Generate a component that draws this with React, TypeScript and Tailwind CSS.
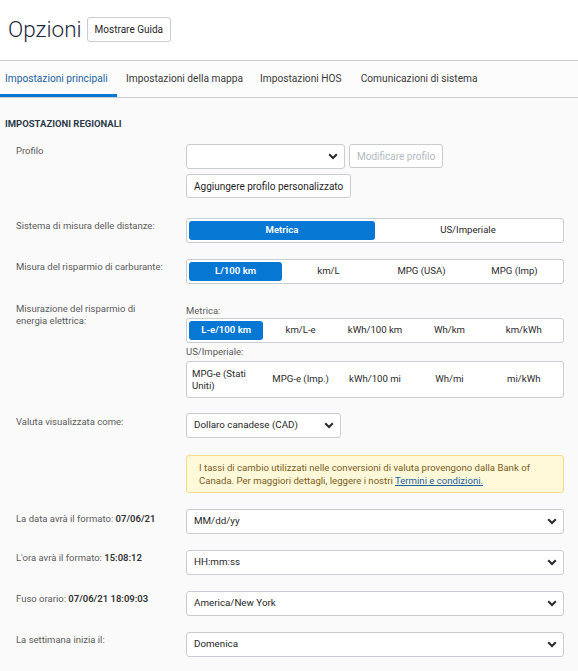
import React from "react";

const Chevron = () => (
  <svg width="10" height="7" viewBox="0 0 10 7" className="shrink-0">
    <path d="M1.2 1.3 L5 5 L8.8 1.3" fill="none" stroke="#2b2b2b" strokeWidth="2.1" />
  </svg>
);

function Select({ value, className = "" }: { value: string; className?: string }) {
  return (
    <div
      className={`h-[25px] bg-white border border-[#c9ccd1] rounded-[3px] flex items-center justify-between pl-[7px] pr-[6px] text-[9.8px] text-[#1f1f1f] ${className}`}
    >
      <span>{value}</span>
      <Chevron />
    </div>
  );
}

function Segmented({ options, active = 0, cols }: { options: React.ReactNode[]; active?: number; cols: string }) {
  return (
    <div className={`bg-white border border-[#c9ccd1] rounded-[3px] p-[2px] grid ${cols}`}>
      {options.map((o, i) => (
        <div
          key={i}
          className={
            i === active
              ? "h-[19px] bg-[#0777d4] text-white font-semibold rounded-[3px] flex items-center justify-center text-[9.6px]"
              : "h-[19px] text-[#2a2a2a] flex items-center justify-center text-[9.6px]"
          }
        >
          {o}
        </div>
      ))}
    </div>
  );
}

function Row({ label, children, className = "", labelClass = "" }: { label: React.ReactNode; children: React.ReactNode; className?: string; labelClass?: string }) {
  return (
    <div className={`flex ${className}`}>
      <div className={`w-[170px] shrink-0 text-[9.5px] leading-[12px] text-[#5a5a5a] pr-2 ${labelClass}`}>{label}</div>
      <div className="w-[378px] shrink-0">{children}</div>
    </div>
  );
}

export default function App() {
  return (
    <div className="min-h-[671px] bg-white font-['Roboto',sans-serif]">
      <div className="h-[60px] flex items-center pl-[8px] gap-[5px] pb-[2px]">
        <h1 className="text-[22.5px] font-light text-[#1e2a3b] leading-none">Opzioni</h1>
        <button className="h-[25px] px-[7px] border border-[#c9ccd1] rounded-[3px] bg-white text-[10px] text-[#1f1f1f]">
          Mostrare Guida
        </button>
      </div>
      <div className="border-t border-b border-[#c9ccd1] bg-[#fcfcfc] h-[38px] flex text-[10.2px] text-[#3a3a3a]">
        <div className="px-[5px] flex items-center border-b-[3px] border-[#0777d4] text-[#1c5f9e] w-[117px] pt-[3px]">
          Impostazioni principali
        </div>
        <div className="pl-[9px] flex items-center">Impostazioni della mappa</div>
        <div className="pl-[17px] flex items-center">Impostazioni HOS</div>
        <div className="pl-[19px] flex items-center">Comunicazioni di sistema</div>
      </div>
      <div className="bg-[#fafafa] pl-[16px] pb-[16px]">
        <div className="-ml-[11px] pt-[20px] text-[9.5px] font-bold text-[#2d3a4b] leading-[12px]">IMPOSTAZIONI REGIONALI</div>

        <Row label="Profilo" className="mt-[14px]" labelClass="pt-[1px]">
          <div className="flex gap-[4px]">
            <Select value="" className="w-[159px] h-[24px]" />
            <button className="h-[24px] px-[7px] border border-[#c9ccd1] rounded-[3px] bg-white text-[10px] text-[#b4bac2]">
              Modificare profilo
            </button>
          </div>
          <button className="mt-[5px] h-[24px] px-[7px] border border-[#c9ccd1] rounded-[3px] bg-white text-[10px] text-[#1f1f1f]">
            Aggiungere profilo personalizzato
          </button>
        </Row>

        <Row label="Sistema di misura delle distanze:" className="mt-[20px]" labelClass="pt-[2px]">
          <Segmented options={["Metrica", "US/Imperiale"]} cols="grid-cols-2" />
        </Row>

        <Row label="Misura del risparmio di carburante:" className="mt-[16px]" labelClass="pt-[2px]">
          <Segmented options={["L/100 km", "km/L", "MPG (USA)", "MPG (Imp)"]} cols="grid-cols-4" />
        </Row>

        <Row label="Misurazione del risparmio di energia elettrica:" className="mt-[19px]" labelClass="pr-[30px]">
          <div className="text-[9.5px] text-[#5a5a5a] leading-[12px] pt-[2px]">Metrica:</div>
          <div className="mt-[1px]">
            <Segmented options={["L-e/100 km", "km/L-e", "kWh/100 km", "Wh/km", "km/kWh"]} cols="grid-cols-5" />
          </div>
          <div className="text-[9.5px] text-[#5a5a5a] leading-[12px] mt-[3px]">US/Imperiale:</div>
          <div className="mt-[3px] bg-white border border-[#c9ccd1] rounded-[3px] px-[2px] grid grid-cols-5 h-[37px] text-[9.6px] text-[#2a2a2a]">
            <div className="flex items-center pl-[3px] leading-[12px]">MPG-e (Stati Uniti)</div>
            <div className="flex items-center justify-center">MPG-e (Imp.)</div>
            <div className="flex items-center justify-center">kWh/100 mi</div>
            <div className="flex items-center justify-center">Wh/mi</div>
            <div className="flex items-center justify-center">mi/kWh</div>
          </div>
        </Row>

        <Row label="Valuta visualizzata come:" className="mt-[15px]" labelClass="pt-[3px]">
          <Select value="Dollaro canadese (CAD)" className="w-[155px] h-[24px]" />
          <div className="mt-[17px] bg-[#fff8d9] border border-[#f4dc8a] rounded-[3px] px-[12px] py-[5px] text-[9.6px] leading-[13px] text-[#7a5d1e]">
            I tassi di cambio utilizzati nelle conversioni di valuta provengono dalla Bank of Canada. Per maggiori dettagli, leggere i nostri{" "}
            <span className="text-[#1b5fa3] underline">Termini e condizioni.</span>
          </div>
        </Row>

        <Row
          label={<>La data avrà il formato: <b className="font-semibold text-[#333]">07/06/21</b></>}
          className="mt-[16px]"
          labelClass="pt-[4px]"
        >
          <Select value="MM/dd/yy" />
        </Row>

        <Row
          label={<>L'ora avrà il formato: <b className="font-semibold text-[#333]">15:08:12</b></>}
          className="mt-[16px]"
          labelClass="pt-[2px]"
        >
          <Select value="HH:mm:ss" className="h-[24px]" />
        </Row>

        <Row
          label={<>Fuso orario: <b className="font-semibold text-[#333]">07/06/21 18:09:03</b></>}
          className="mt-[16px]"
          labelClass="pt-[2px]"
        >
          <Select value="America/New York" className="h-[24px]" />
        </Row>

        <Row label="La settimana inizia il:" className="mt-[16px]" labelClass="pt-[2px]">
          <Select value="Domenica" className="h-[24px]" />
        </Row>
      </div>
    </div>
  );
}
